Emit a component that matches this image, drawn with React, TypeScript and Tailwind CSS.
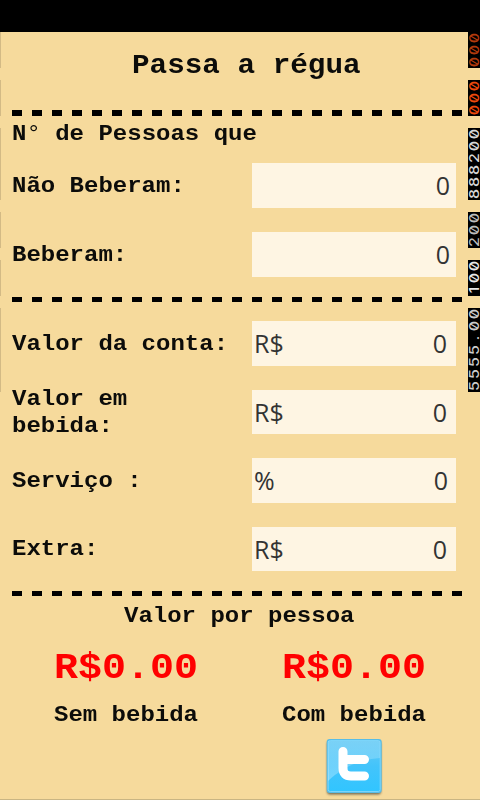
import { clsx } from 'clsx';
import type { ReactNode } from 'react';

function Dashes({ className }: { className?: string }) {
  return (
    <div className={clsx('flex w-[450px] justify-between', className)}>
      {Array.from({ length: 23 }, (_, i) => (
        <span key={i} className="h-full w-2.5 bg-black" />
      ))}
    </div>
  );
}

// Typewriter lettering, slightly flattened.
function Type({ children }: { children: ReactNode }) {
  return <span className="inline-block scale-y-[0.92]">{children}</span>;
}

type FieldProps = { label: ReactNode; unit?: string; value: string; className: string; pad: string };

function Field({ label, unit, value, className, pad }: FieldProps) {
  return (
    <div className={clsx('flex items-center', className)}>
      <label className="w-60 shrink-0 pt-px">
        {label}
      </label>
      <div
        className={clsx(
          "flex h-full w-[204px] items-center justify-between bg-[#fef5e3] pl-[2px] font-['Open_Sans',sans-serif] text-[25px] font-normal text-[#333]",
          pad,
        )}
      >
        <span>{unit}</span>
        <span>{value}</span>
      </div>
    </div>
  );
}

// Frame counters run up the right edge, one 12px cell per digit.
const counters = [
  { text: '000', color: 'text-[#b33a0c]' },
  { text: '000', color: 'text-[#f04a0c]' },
  { text: '888200', color: 'text-[#d8d8d8]' },
  { text: '200', color: 'text-[#bcbcbc]' },
  { text: '100', color: 'text-[#e8e8e8]' },
  { text: '5555.00', color: 'text-[#cccccc]' },
];

function Counters() {
  return (
    <aside className="flex w-3 shrink-0 flex-col gap-3">
      {counters.map((c, i) => (
        <div
          key={i}
          className={clsx("flex flex-col-reverse bg-black font-['Inter',sans-serif] text-[10px] leading-3 font-medium slashed-zero", c.color)}
        >
          {c.text.split('').map((d, j) => (
            <span key={j} className="flex h-3 w-3 -rotate-90 scale-x-[1.6] scale-y-[1.3] items-center justify-center">
              {d}
            </span>
          ))}
        </div>
      ))}
    </aside>
  );
}

function TwitterBadge() {
  return (
    <svg width="58" height="60" viewBox="0 0 58 60" className="block">
      <defs>
        <linearGradient id="sky" x1="0" y1="0" x2="0" y2="1">
          <stop offset="0" stopColor="#68cbf5" />
          <stop offset="0.5" stopColor="#43c4fb" />
          <stop offset="1" stopColor="#31c5ff" />
        </linearGradient>
        <linearGradient id="shine" x1="0" y1="0" x2="0" y2="1">
          <stop offset="0" stopColor="#fff" stopOpacity="0.12" />
          <stop offset="1" stopColor="#fff" stopOpacity="0.3" />
        </linearGradient>
        <filter id="soft" x="-10%" y="-10%" width="120%" height="125%">
          <feGaussianBlur stdDeviation="1" />
        </filter>
      </defs>
      <rect x="2" y="3" width="54" height="53.5" rx="3" fill="#4c4a3e" opacity="0.75" filter="url(#soft)" />
      <rect x="1.7" y="1" width="55" height="54" rx="3" fill="#58bde6" />
      <rect x="3.2" y="2.5" width="52" height="51" rx="2" fill="url(#sky)" stroke="#7bd5fa" />
      <path d="M3 3H55V20C36 21 18 29 3 43Z" fill="url(#shine)" />
      <path
        d="M18 13.5V30Q18 38 26 38H39.5M18 21.5H39.5"
        fill="none"
        stroke="#fff"
        strokeWidth="9"
        strokeLinecap="round"
        strokeLinejoin="round"
      />
    </svg>
  );
}

export default function App() {
  return (
    <div className="flex h-[800px] w-[480px] flex-col overflow-hidden bg-[#f6da9c] font-['Liberation_Mono',monospace] text-[24px] leading-[27px] font-bold text-[#0c0c0a]">
      <div className="h-8 shrink-0 bg-black" />
      <div className="flex h-[768px] border-b border-[#c9b583]">
        <div className="flex w-px shrink-0 flex-col gap-3">
          <i className="h-9 bg-[#d3ba85]" />
          <i className="h-9 bg-[#d3ba85]" />
          <i className="h-[72px] bg-[#d3ba85]" />
          <i className="h-9 bg-[#d3ba85]" />
          <i className="h-9 bg-[#d3ba85]" />
          <i className="h-[84px] bg-[#d3ba85]" />
        </div>
        <main className="flex w-[467px] shrink-0 flex-col pl-[11px]">
          <h1 className="h-[78px] pt-[18px] pl-[120px] text-[29.3px] leading-[34px] whitespace-nowrap">
            <Type>Passa a régua</Type>
          </h1>
          <Dashes className="h-[6px]" />
          <p className="mt-[5px] h-[27px]">
            <Type>
              N<span className="font-normal">°</span> de Pessoas que
            </Type>
          </p>
          <Field label={<Type>Não Beberam:</Type>} value="0" className="mt-[15px] h-[45px]" pad="pr-[6px]" />
          <Field label={<Type>Beberam:</Type>} value="0" className="mt-[24px] h-[45px]" pad="pr-[6px]" />
          <Dashes className="mt-[20px] h-[5px]" />
          <Field label={<Type>Valor da conta:</Type>} unit="R$" value="0" className="mt-[19px] h-[45px]" pad="pr-[9px]" />
          <Field
            label={
              <>
                <Type>Valor em</Type>
                <br />
                <Type>bebida:</Type>
              </>
            }
            unit="R$"
            value="0"
            className="mt-[24px] h-[44px]"
            pad="pr-[9px]"
          />
          <Field label={<Type>Serviço :</Type>} unit="%" value="0" className="mt-[24px] h-[45px]" pad="pr-[8px]" />
          <Field label={<Type>Extra:</Type>} unit="R$" value="0" className="mt-[24px] h-[44px]" pad="pr-[9px]" />
          <Dashes className="mt-[20px] h-[5px]" />
          <p className="mt-[7px] pl-[112px]">
            <Type>Valor por pessoa</Type>
          </p>
          <div className="mt-[15px] flex">
            <section className="w-[228px] pl-[42px]">
              <p className="text-[40px] leading-[48px] text-[#ff0000]">
                <Type>R$0.00</Type>
              </p>
              <p className="mt-[9px]">
                <Type>Sem bebida</Type>
              </p>
            </section>
            <section className="w-[228px] pl-[42px]">
              <p className="text-[40px] leading-[48px] text-[#ff0000]">
                <Type>R$0.00</Type>
              </p>
              <p className="mt-[9px]">
                <Type>Com bebida</Type>
              </p>
              <a className="mt-[9px] ml-[43px] block w-[58px]">
                <TwitterBadge />
              </a>
            </section>
          </div>
        </main>
        <Counters />
      </div>
    </div>
  );
}
